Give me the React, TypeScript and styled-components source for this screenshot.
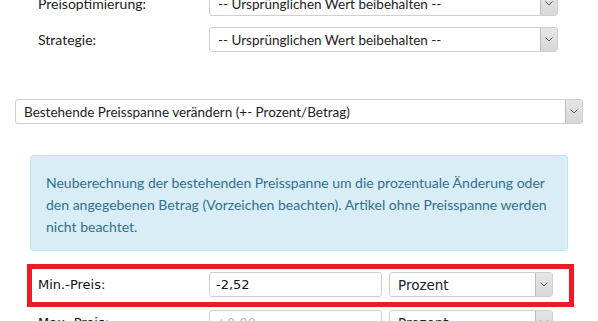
import React from "react";
import styled, { createGlobalStyle } from "styled-components";

const Global = createGlobalStyle`
  html, body { margin: 0; padding: 0; background: #fff; }
  body { font-family: "Lato", "Open Sans", sans-serif; color: #222; overflow: hidden; }
`;

const Page = styled.div`
  width: 598px;
  height: 321px;
  overflow: hidden;
`;

const Inner = styled.div`
  margin-top: -9px;
  display: flex;
  flex-direction: column;
`;

const Row = styled.div<{ $top?: number }>`
  display: grid;
  grid-template-columns: 171px 349px;
  align-items: center;
  padding-left: 38px;
  margin-top: ${(p) => p.$top ?? 0}px;
  height: 25px;
`;

const Label = styled.label`
  font-size: 14px;
  color: #222;
`;

const SelectBox = styled.div<{ $w?: number }>`
  position: relative;
  height: 25px;
  box-sizing: border-box;
  border: 1px solid #cfcfcf;
  border-radius: 3px;
  background: #fff;
  display: flex;
  align-items: center;
  padding-left: 8px;
  font-size: 13.5px;
  color: #222;
  ${(p) => (p.$w ? `width: ${p.$w}px;` : "")}
`;

const Arrow = styled.span`
  position: absolute;
  right: 0;
  top: 0;
  bottom: 0;
  width: 16px;
  background: linear-gradient(#e6e6e6, #d8d8d8);
  border-left: 1px solid #b9b9b9;
  border-radius: 0 2px 2px 0;
  display: flex;
  align-items: center;
  justify-content: center;
`;

const Chevron = () => (
  <svg width="8" height="5" viewBox="0 0 8 5">
    <path d="M0.5 0.5 L4 4 L7.5 0.5" fill="none" stroke="#555" strokeWidth="1" />
  </svg>
);

const Select = ({ children, w, font }: { children: React.ReactNode; w?: number; font?: string }) => (
  <SelectBox $w={w} style={font ? { fontFamily: font } : undefined}>
    {children}
    <Arrow>
      <Chevron />
    </Arrow>
  </SelectBox>
);

const WideWrap = styled.div`
  margin: 47px 0 0 15px;
  width: 568px;
`;

const Info = styled.div`
  margin: 31px 0 0 30px;
  width: 538px;
  height: 96px;
  box-sizing: border-box;
  background: #d9edf7;
  border: 1px solid #bce8f1;
  border-radius: 3px;
  padding: 16px 15px 0 15px;
  color: #31708f;
  font-size: 14px;
  line-height: 22px;
`;

const Highlight = styled.div`
  margin: 13px 0 0 27px;
  width: 547px;
  height: 43px;
  box-sizing: border-box;
  border: 5px solid #ec1c24;
  padding-top: 3px;
`;

const PriceRow = styled.div<{ $left: number; $top?: number }>`
  display: grid;
  grid-template-columns: 171px 173px 171px;
  align-items: center;
  padding-left: ${(p) => p.$left}px;
  margin-top: ${(p) => p.$top ?? 0}px;
  height: 25px;
  & > :last-child { margin-left: 7px; }
`;

const PriceLabel = styled.span`
  font-family: "DejaVu Sans", sans-serif;
  font-size: 13px;
  color: #111;
`;

const Input = styled.div<{ $muted?: boolean }>`
  height: 25px;
  box-sizing: border-box;
  border: 1px solid #cfcfcf;
  border-radius: 3px;
  padding-left: 6px;
  display: flex;
  align-items: center;
  font-family: "DejaVu Sans", sans-serif;
  font-size: 13px;
  color: ${(p) => (p.$muted ? "#bbb" : "#111")};
`;

export default function App() {
  return (
    <Page>
      <Global />
      <Inner>
        <Row>
          <Label>Preisoptimierung:</Label>
          <Select>-- Ursprünglichen Wert beibehalten --</Select>
        </Row>
        <Row $top={11}>
          <Label>Strategie:</Label>
          <Select>-- Ursprünglichen Wert beibehalten --</Select>
        </Row>
        <WideWrap>
          <Select>Bestehende Preisspanne verändern (+- Prozent/Betrag)</Select>
        </WideWrap>
        <Info>
          Neuberechnung der bestehenden Preisspanne um die prozentuale Änderung oder den
          angegebenen Betrag (Vorzeichen beachten). Artikel ohne Preisspanne werden nicht
          beachtet.
        </Info>
        <Highlight>
          <PriceRow $left={6}>
            <PriceLabel>Min.-Preis:</PriceLabel>
            <Input>-2,52</Input>
            <Select font='"DejaVu Sans", sans-serif'>Prozent</Select>
          </PriceRow>
        </Highlight>
        <PriceRow $left={38} $top={3}>
          <PriceLabel>Max.-Preis:</PriceLabel>
          <Input $muted>+0,00</Input>
          <Select font='"DejaVu Sans", sans-serif'>Prozent</Select>
        </PriceRow>
      </Inner>
    </Page>
  );
}
